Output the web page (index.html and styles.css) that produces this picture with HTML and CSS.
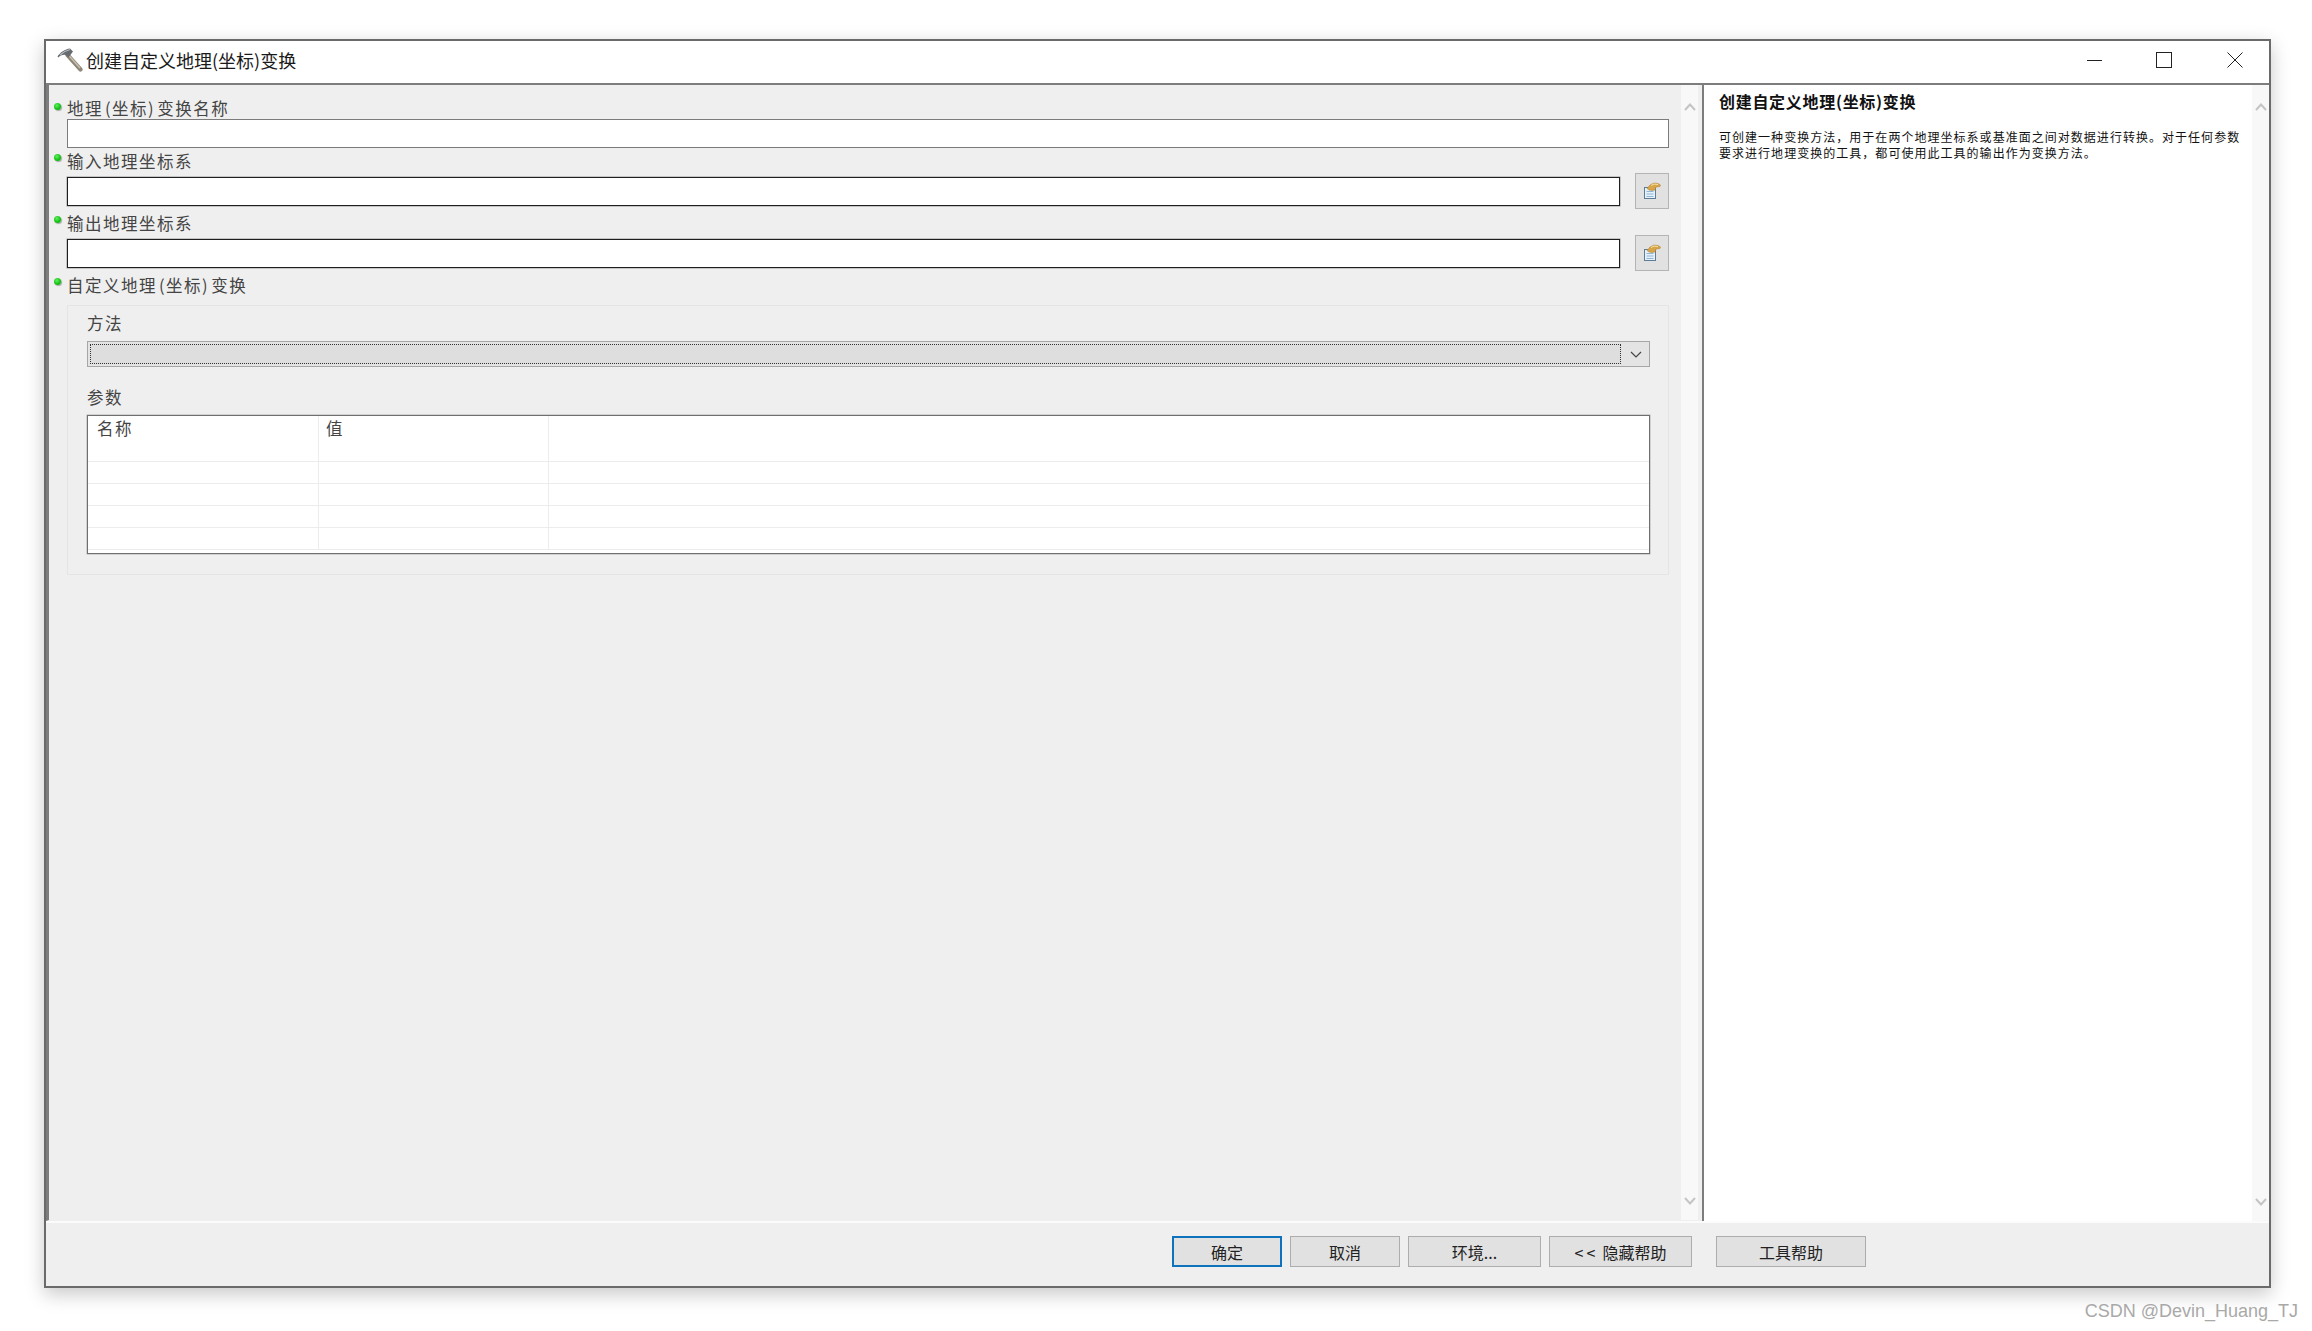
FILE: index.html
```
<!DOCTYPE html>
<html lang="zh-CN">
<head>
<meta charset="utf-8">
<title>创建自定义地理(坐标)变换</title>
<link rel="stylesheet" href="styles.css">
</head>
<body>
<div class="window">
  <header class="titlebar">
    <svg class="hammer" viewBox="0 0 26 26" aria-hidden="true">
      <path d="M10.500 8 L23.500 22.500" stroke="#8f8778" stroke-width="4.200" stroke-linecap="round"/>
      <path d="M11 7.500 L23 21" stroke="#c9c3b6" stroke-width="1.300"/>
      <path d="M.5 9.500 C3 5.500 8 2 13 1.500 L16 4.500 L11.500 10.500 L8.500 8 C6 7.500 3 8.500 1.500 10.500 Z" fill="#666b70"/>
      <path d="M3 8 C6 5 9 3.500 13 2.500" stroke="#b8bdc0" stroke-width="1.200" fill="none"/>
    </svg>
    <span class="title-text">创建自定义地理(坐标)变换</span>
    <div class="win-controls">
      <svg class="win-btn win-min" viewBox="0 0 16 16" aria-hidden="true"><path d="M0 8.500H15" stroke="#222" fill="none"/></svg>
      <svg class="win-btn" viewBox="0 0 16 16" aria-hidden="true"><rect x=".5" y=".5" width="15" height="15" stroke="#222" fill="none"/></svg>
      <svg class="win-btn" viewBox="0 0 16 16" aria-hidden="true"><path d="M.5 .5L15.500 15.500M15.500 .5L.5 15.500" stroke="#222" fill="none"/></svg>
    </div>
  </header>
  <main class="main">
    <section class="tool-pane">
      <div class="form">
        <div class="field field-name">
          <label class="label"><i class="dot"></i>地理<span class="par">(坐标)</span>变换名称</label>
          <div class="input input-soft"></div>
        </div>
        <div class="field field-in">
          <label class="label"><i class="dot"></i>输入地理坐标系</label>
          <div class="input-row">
            <div class="input"></div>
            <button class="browse" aria-label="浏览">
              <svg viewBox="0 0 18 18" class="browse-icon" aria-hidden="true">
                <rect x="1.500" y="5.500" width="11" height="11" fill="#e6f0f8" stroke="#5f7c96"/>
                <path d="M3.500 9.500H10.500M3.500 12H10.500M3.500 14.500H10.500" stroke="#8fb6d4"/>
                <path d="M4 6.500 L7 3 L11 1 L15 1.500 L17.500 3 L17 4.500 L13 5 L12 8 L9 8.500 L6 8 Z" fill="#d8a548" stroke="#a97d2e" stroke-width=".5"/>
                <path d="M8 3.500 L11 2 L15 2.500" stroke="#f6e2ae" fill="none"/>
              </svg>
            </button>
          </div>
        </div>
        <div class="field field-out">
          <label class="label"><i class="dot"></i>输出地理坐标系</label>
          <div class="input-row">
            <div class="input"></div>
            <button class="browse" aria-label="浏览">
              <svg viewBox="0 0 18 18" class="browse-icon" aria-hidden="true">
                <rect x="1.500" y="5.500" width="11" height="11" fill="#e6f0f8" stroke="#5f7c96"/>
                <path d="M3.500 9.500H10.500M3.500 12H10.500M3.500 14.500H10.500" stroke="#8fb6d4"/>
                <path d="M4 6.500 L7 3 L11 1 L15 1.500 L17.500 3 L17 4.500 L13 5 L12 8 L9 8.500 L6 8 Z" fill="#d8a548" stroke="#a97d2e" stroke-width=".5"/>
                <path d="M8 3.500 L11 2 L15 2.500" stroke="#f6e2ae" fill="none"/>
              </svg>
            </button>
          </div>
        </div>
        <div class="field field-custom">
          <label class="label"><i class="dot"></i>自定义地理<span class="par">(坐标)</span>变换</label>
          <div class="group">
            <div class="sub-label">方法</div>
            <div class="combo">
              <div class="combo-value"></div>
              <svg class="combo-arrow" viewBox="0 0 12 7" aria-hidden="true"><path d="M1 1L6 6L11 1" stroke="#444" fill="none" stroke-width="1.200"/></svg>
            </div>
            <div class="sub-label sub-label-params">参数</div>
            <div class="table">
              <div class="row row-head"><div class="cell c1">名称</div><div class="cell c2">值</div><div class="cell"></div></div>
              <div class="row"><div class="cell c1"></div><div class="cell c2"></div><div class="cell"></div></div>
              <div class="row"><div class="cell c1"></div><div class="cell c2"></div><div class="cell"></div></div>
              <div class="row"><div class="cell c1"></div><div class="cell c2"></div><div class="cell"></div></div>
              <div class="row"><div class="cell c1"></div><div class="cell c2"></div><div class="cell"></div></div>
              <div class="row"><div class="cell c1"></div><div class="cell c2"></div><div class="cell"></div></div>
            </div>
          </div>
        </div>
      </div>
      <div class="scrollbar">
        <svg class="chev" viewBox="0 0 12 8" aria-hidden="true"><path d="M1 7L6 1.500L11 7" stroke="#c4c4c4" stroke-width="2" fill="none"/></svg>
        <svg class="chev" viewBox="0 0 12 8" aria-hidden="true"><path d="M1 1L6 6.500L11 1" stroke="#c4c4c4" stroke-width="2" fill="none"/></svg>
      </div>
    </section>
    <aside class="help-pane">
      <div class="help-body">
        <h1 class="help-title">创建自定义地理(坐标)变换</h1>
        <p class="help-text">可创建一种变换方法，用于在两个地理坐标系或基准面之间对数据进行转换。对于任何参数要求进行地理变换的工具，都可使用此工具的输出作为变换方法。</p>
      </div>
      <div class="scrollbar">
        <svg class="chev" viewBox="0 0 12 8" aria-hidden="true"><path d="M1 7L6 1.500L11 7" stroke="#c4c4c4" stroke-width="2" fill="none"/></svg>
        <svg class="chev" viewBox="0 0 12 8" aria-hidden="true"><path d="M1 1L6 6.500L11 1" stroke="#c4c4c4" stroke-width="2" fill="none"/></svg>
      </div>
    </aside>
  </main>
  <footer class="footer">
    <button class="btn btn-ok">确定</button>
    <button class="btn btn-cancel">取消</button>
    <button class="btn btn-env">环境...</button>
    <button class="btn btn-hide"><span class="lt">&lt;&lt;</span>隐藏帮助</button>
    <button class="btn btn-help">工具帮助</button>
  </footer>
</div>
<div class="watermark">CSDN @Devin_Huang_TJ</div>
</body>
</html>
```
FILE: styles.css
```
* { box-sizing: border-box; }
html, body { margin: 0; height: 100%; }
body {
  background: #fff;
  font-family: "Noto Sans CJK SC", "Liberation Sans", sans-serif;
  color: #333;
  overflow: hidden;
  position: relative;
}
.window {
  margin: 39px 0 0 44px;
  width: 2227px;
  height: 1249px;
  border: 2px solid #6a6a6a;
  background: #efefef;
  display: flex;
  flex-direction: column;
  box-shadow: 0 6px 18px rgba(0,0,0,.22);
}
.titlebar {
  height: 44px;
  flex: none;
  background: #fff;
  display: flex;
  align-items: center;
  padding: 0 0 4px 11px;
  border-bottom: 2px solid #7d7d7d;
}
.hammer { width: 26px; height: 26px; margin-right: 3px; }
.title-text { font-size: 18px; color: #1a1a1a; line-height: 24px; }
.win-controls { margin-left: auto; display: flex; gap: 55px; padding-right: 26px; }
.win-btn { width: 16px; height: 16px; display: block; }
.win-min { margin-right: -2px; }
.main { flex: 1; display: flex; min-height: 0; }
.tool-pane {
  width: 1652px;
  flex: none;
  display: flex;
  border-left: 3px solid #7d7d7d;
  background: #efefef;
  border-bottom: 1px solid #efefef;
}
.form { width: 1632px; }
.scrollbar {
  width: 17px;
  flex: none;
  background: #f8f8f8;
  display: flex;
  flex-direction: column;
  justify-content: space-between;
  align-items: center;
  padding: 18px 0 15px;
}
.chev { width: 12px; height: 8px; display: block; }
.help-pane {
  margin-left: 4px;
  flex: 1;
  min-width: 0;
  display: flex;
  background: #fff;
  border-left: 2px solid #7d7d7d;
}
.help-body { flex: 1; padding: 4px 9px 0 15px; }
.help-title { margin: 0; font-size: 16px; line-height: 24px; font-weight: 700; color: #111; letter-spacing: .7px; }
.help-text { margin: 16px 0 0; font-size: 12px; line-height: 15.500px; color: #111; letter-spacing: 1.030px; }
.footer {
  flex: none;
  height: 65px;
  border-top: 2px solid #fbfbfb;
  background: #efefef;
  display: flex;
  align-items: flex-start;
  padding: 13px 0 0 1126px;
  gap: 8px;
}
.btn {
  height: 31px;
  background: #e1e1e1;
  border: 1px solid #adadad;
  font: 16px/1 "Noto Sans CJK SC", "Liberation Sans", sans-serif;
  color: #222;
  padding: 0;
}
.btn-ok { width: 110px; border: 2px solid #0f72bd; }
.btn-cancel { width: 110px; }
.btn-env { width: 133px; }
.btn-hide { width: 143px; }
.lt { letter-spacing: 3px; margin-right: 4px; }
.btn-help { width: 150px; margin-left: 16px; }
.field { display: block; }
.label {
  display: block;
  position: relative;
  padding-left: 18px;
  font-size: 16.500px;
  letter-spacing: 1.500px;
  line-height: 22px;
  color: #444;
}
.par { margin: 0 2px; }
.dot {
  position: absolute;
  left: 5px;
  top: 4px;
  width: 7px;
  height: 7px;
  border-radius: 50%;
  background: radial-gradient(circle at 40% 35%, #5cf25c, #07b507 70%);
  box-shadow: 1px 1px 1px rgba(0,0,0,.3);
}
.field-name { padding-top: 14px; }
.field-name .label { height: 20px; line-height: 19px; }
.input {
  height: 29px;
  background: #fff;
  border: 1px solid #1f1f1f;
  box-shadow: 0 0 0 .5px rgba(0,0,0,.35);
  flex: 1;
}
.input-soft { margin-left: 18px; width: 1602px; border-color: #7b7b7b; box-shadow: none; flex: none; }
.field-in { padding-top: 2px; }
.field-in .label, .field-out .label { height: 27px; line-height: 22px; }
.field-out { padding-top: 3px; }
.field-custom { padding-top: 3px; }
.input-row { display: flex; align-items: center; padding-left: 18px; width: 1620px; gap: 15px; margin-top: -4px; }
.browse {
  width: 34px;
  height: 36px;
  flex: none;
  padding: 0;
  background: #e1e1e1;
  border: 1px solid #b4b4b4;
  display: flex;
  align-items: center;
  justify-content: center;
}
.browse-icon { width: 18px; height: 18px; display: block; }
.field-custom .label { height: 31px; }
.group {
  margin: 0 0 0 18px;
  width: 1602px;
  height: 270px;
  border: 1px solid #e4e4e4;
  padding: 5px 18px 0 19px;
}
.sub-label { font-size: 16.500px; letter-spacing: 1.500px; line-height: 24px; color: #444; }
.combo {
  margin-top: 6px;
  height: 26px;
  border: 1px solid #a6a6a6;
  background: #e4e4e4;
  padding: 2px;
  display: flex;
  align-items: center;
}
.combo-value { width: 1531px; height: 20px; background: #dedede; border: 1px dotted #333; }
.combo-arrow { width: 12px; height: 7px; margin-left: 9px; }
.sub-label-params { margin-top: 18px; }
.table {
  margin-top: 6px;
  height: 139px;
  border: 1px solid #6f6f6f;
  box-shadow: 0 0 0 .5px rgba(0,0,0,.25);
  background: #fff;
  overflow: hidden;
}
.row {
  display: flex;
  height: 22px;
  border-bottom: 1px solid #ececec;
}
.row-head { height: 24px; border-bottom: 0; }
.cell { height: 100%; padding-left: 9px; font-size: 16.500px; letter-spacing: 1.500px; line-height: 24px; color: #444; flex: 1; }
.c1 { flex: none; width: 231px; border-right: 1px solid #ececec; }
.c2 { flex: none; width: 230px; border-right: 1px solid #ececec; padding-left: 7px; }
.watermark {
  position: absolute;
  right: 14px;
  top: 1300px;
  font: 18px/22px "Liberation Sans", sans-serif;
  color: #a9a9a9;
}
```
